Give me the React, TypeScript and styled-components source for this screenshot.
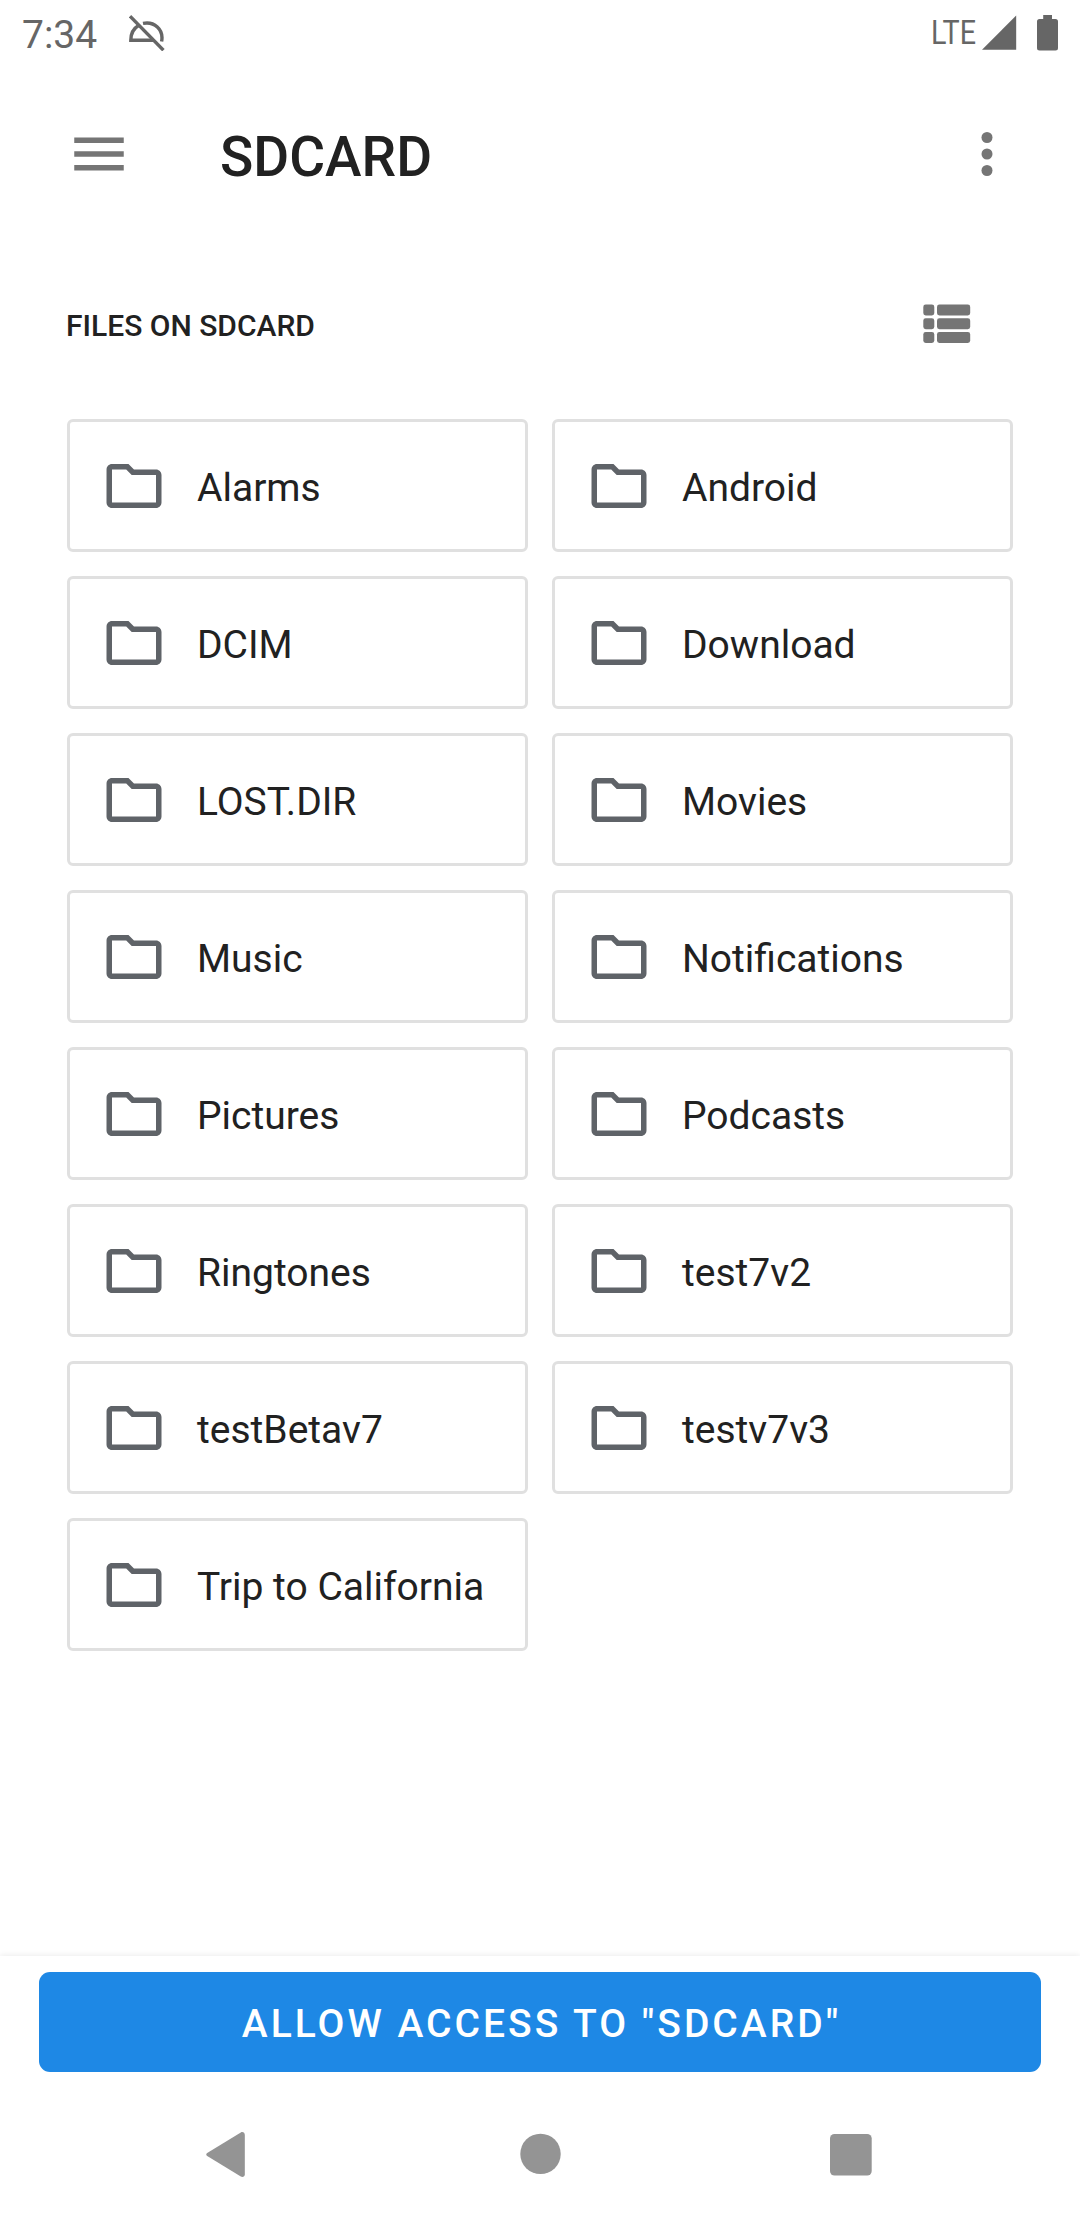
import React from "react";
import styled, { createGlobalStyle } from "styled-components";

const GlobalStyle = createGlobalStyle`
  * { box-sizing: border-box; }
  body { margin: 0; background: #fff; font-family: Roboto, "Noto Sans", sans-serif; }
  svg { display: block; flex: none; }
`;

const Screen = styled.div`
  width: 1080px;
  height: 2220px;
  display: flex;
  flex-direction: column;
  background: #fff;
  color: #212121;
  overflow: hidden;
`;

const StatusBar = styled.header`
  height: 66px;
  display: flex;
  align-items: flex-start;
  padding: 15px 22px 0 22px;
  color: #666;
`;

const Clock = styled.span`
  width: 107px;
  font-size: 39px;
  line-height: 41px;
`;

const StatusIcons = styled.div`
  margin-left: auto;
  display: flex;
  align-items: flex-start;
`;

const Network = styled.span`
  width: 51px;
  font-size: 33px;
  line-height: 36px;
  transform: scaleX(0.87);
  transform-origin: left;
`;

const Battery = styled.svg`
  margin-left: 20px;
`;

const AppBar = styled.div`
  height: 176px;
  display: flex;
  align-items: center;
  padding: 0 60px 0 66px;
`;

const IconButton = styled.button`
  padding: 0;
  border: 0;
  background: none;
  color: #757575;
`;

const Title = styled.h1`
  flex: 1;
  margin: 0 0 0 88px;
  padding-top: 6px;
  font-size: 55px;
  line-height: 64px;
  font-weight: 500;
`;

const SectionHeader = styled.div`
  height: 164px;
  display: flex;
  align-items: center;
  justify-content: space-between;
  padding: 0 109px 0 66px;
`;

const SectionTitle = styled.h2`
  margin: 0;
  padding-top: 3px;
  font-size: 30px;
  line-height: 36px;
  font-weight: 500;
`;

const Grid = styled.main`
  flex: 1;
  display: grid;
  grid-template-columns: 461px 461px;
  grid-auto-rows: 133px;
  gap: 24px;
  padding: 13px 67px 0;
  align-content: start;
`;

const Card = styled.div`
  display: flex;
  align-items: center;
  padding-left: 31px;
  border: 3px solid #e0e0e0;
  border-radius: 6px;
`;

const CardLabel = styled.span`
  margin-left: 30px;
  padding-top: 4px;
  font-size: 39px;
  line-height: 46px;
  white-space: nowrap;
`;

const Footer = styled.footer`
  height: 132px;
  padding: 16px 39px 0;
  background: #fff;
  box-shadow: 0 -1px 6px rgba(0, 0, 0, 0.08);
`;

const AllowButton = styled.button`
  width: 100%;
  height: 100px;
  padding: 3px 0 0 3px;
  border: 0;
  border-radius: 11px;
  background: #1e88e5;
  color: #fff;
  font: 500 39px/46px Roboto, "Noto Sans", sans-serif;
  letter-spacing: 3px;
`;

const NavBar = styled.nav`
  height: 132px;
  display: flex;
  align-items: flex-start;
  justify-content: space-between;
  padding: 44px 208px 0 206px;
  background: #fff;
  color: #949494;
`;

const folders = [
  "Alarms", "Android", "DCIM", "Download", "LOST.DIR", "Movies", "Music",
  "Notifications", "Pictures", "Podcasts", "Ringtones", "test7v2",
  "testBetav7", "testv7v3", "Trip to California",
];

const FolderIcon = () => (
  <svg width="66" height="66" viewBox="0 0 24 24" fill="#5f6368">
    <path d="M9.17 6l2 2H20v10H4V6h5.17M10 4H4c-1.1 0-1.99.9-1.99 2L2 18c0 1.1.9 2 2 2h16c1.1 0 2-.9 2-2V8c0-1.1-.9-2-2-2h-8l-2-2z" />
  </svg>
);

export default function App() {
  return (
    <>
      <GlobalStyle />
      <Screen>
        <StatusBar>
          <Clock>7:34</Clock>
          <svg width="36" height="36" viewBox="129 15 36 36" fill="none" stroke="currentColor" strokeWidth="3.4">
            <path d="M130 16.2L163.4 50.2" />
            <path d="M138.5 25.5C133.5 28.5 130.8 33.5 130.8 40.2H153" />
            <path d="M143 23.4C154 21.2 164 29 161.6 41.5" />
          </svg>
          <StatusIcons>
            <Network>LTE</Network>
            <svg width="35" height="35" viewBox="0 0 35 35" fill="currentColor">
              <path d="M34.2 .5V34.7H0z" />
            </svg>
            <Battery width="21" height="36" viewBox="0 0 21 36" fill="currentColor">
              <path d="M6.2 0h8.8v4h3.5A2.5 2.5 0 0 1 21 6.5V33a2.5 2.5 0 0 1-2.5 2.5h-16A2.5 2.5 0 0 1 0 33V6.5A2.5 2.5 0 0 1 2.5 4h3.7z" />
            </Battery>
          </StatusIcons>
        </StatusBar>

        <AppBar>
          <IconButton aria-label="Menu">
            <svg width="66" height="66" viewBox="0 0 24 24" fill="currentColor">
              <path d="M3 18h18v-2H3v2zm0-5h18v-2H3v2zm0-7v2h18V6H3z" />
            </svg>
          </IconButton>
          <Title>SDCARD</Title>
          <IconButton aria-label="More options">
            <svg width="66" height="66" viewBox="0 0 24 24" fill="currentColor">
              <circle cx="12" cy="6" r="2" />
              <circle cx="12" cy="12" r="2" />
              <circle cx="12" cy="18" r="2" />
            </svg>
          </IconButton>
        </AppBar>

        <SectionHeader>
          <SectionTitle>FILES ON SDCARD</SectionTitle>
          <IconButton aria-label="List view">
            <svg width="48" height="40" viewBox="0 0 48 40" fill="currentColor">
              {[0.5, 14.25, 28].map((y) => (
                <React.Fragment key={y}>
                  <rect x="0.3" y={y} width="11" height="11" rx="2.4" />
                  <rect x="14" y={y} width="33.2" height="11" rx="2.4" />
                </React.Fragment>
              ))}
            </svg>
          </IconButton>
        </SectionHeader>

        <Grid>
          {folders.map((name) => (
            <Card key={name}>
              <FolderIcon />
              <CardLabel>{name}</CardLabel>
            </Card>
          ))}
        </Grid>

        <Footer>
          <AllowButton>ALLOW ACCESS TO "SDCARD"</AllowButton>
        </Footer>

        <NavBar>
          <svg width="39" height="48" viewBox="0 0 39 48" fill="currentColor">
            <path d="M1.2 21L34.8 .4C36.8-.6 38.8.6 38.8 2.9V42.2C38.8 44.5 36.8 45.7 34.8 44.6L1.2 24C-.1 23.1-.1 21.9 1.2 21z" />
          </svg>
          <svg width="50" height="48" viewBox="0 0 50 48" fill="currentColor">
            <circle cx="27.5" cy="21.9" r="20.2" />
          </svg>
          <svg width="42" height="48" viewBox="0 0 42 48" fill="currentColor">
            <rect x="0" y="2" width="41.7" height="41.6" rx="4.5" />
          </svg>
        </NavBar>
      </Screen>
    </>
  );
}
